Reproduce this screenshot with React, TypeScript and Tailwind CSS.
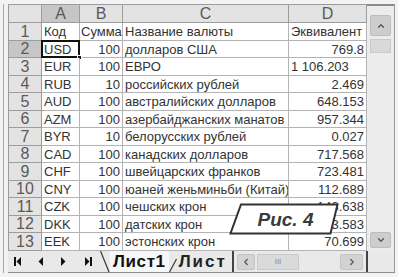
import { ChevronUp, ChevronDown, ChevronLeft, ChevronRight } from "lucide-react";

const rows = [
  ["Код", "Сумма", "Название валюты", "Эквивалент"],
  ["USD", "100", "долларов США", "769.8"],
  ["EUR", "100", "ЕВРО", "1 106.203"],
  ["RUB", "10", "российских рублей", "2.469"],
  ["AUD", "100", "австралийских долларов", "648.153"],
  ["AZM", "100", "азербайджанских манатов", "957.344"],
  ["BYR", "10", "белорусских рублей", "0.027"],
  ["CAD", "100", "канадских долларов", "717.568"],
  ["CHF", "100", "швейцарских франков", "723.481"],
  ["CNY", "100", "юаней женьминьби (Китай)", "112.689"],
  ["CZK", "100", "чешских крон", "143.638"],
  ["DKK", "100", "датских крон", "473.583"],
  ["EEK", "100", "эстонских крон", "70.699"],
];

const hdr =
  "flex items-center justify-center border-r border-b border-[#9c9c9c] text-[16px] leading-none text-[#5a5a5a]";

const Tri = ({ dir, bar }: { dir: "l" | "r"; bar?: boolean }) => (
  <svg width={bar ? 7 : 5} height="9" viewBox={bar ? "0 0 7 9" : "0 0 5 9"}>
    {dir === "l" ? (
      <>
        {bar && <rect x="0" y="0" width="2" height="9" fill="#111" />}
        <polygon points={bar ? "7,0 7,9 2.5,4.5" : "5,0 5,9 0.5,4.5"} fill="#111" />
      </>
    ) : (
      <>
        <polygon points="0,0 0,9 4.5,4.5" fill="#111" />
        {bar && <rect x="5" y="0" width="2" height="9" fill="#111" />}
      </>
    )}
  </svg>
);

export default function App() {
  return (
    <div className="relative w-[398px] h-[277px] overflow-hidden bg-[#f3f3f3] font-['Liberation_Sans',Arial,sans-serif]">
      <div className="flex pl-[3px] pt-[4px]">
        <div className="flex flex-col border-l border-[#a8a8a8] pl-[4px]">
          <div className="flex">
            {/* Grid */}
            <div className="flex flex-col w-[359px] border-t border-[#9c9c9c]">
              <div className="flex h-[18px]">
                <div className={`${hdr} w-[34px] bg-[#e3e3e3] border-l`} />
                <div className={`${hdr} w-[38px] bg-[#c6c6c6]`}>A</div>
                <div className={`${hdr} w-[43px] bg-[#e3e3e3]`}>B</div>
                <div className={`${hdr} w-[166px] bg-[#e3e3e3]`}>C</div>
                <div className={`${hdr} w-[78px] bg-[#e3e3e3]`}>D</div>
              </div>
              {rows.map((r, i) => (
                <div
                  key={i}
                  className={`flex ${i % 2 === 0 ? "h-[18px]" : "h-[17px]"} text-[13px] leading-none text-[#333]`}
                >
                  <div
                    className={`${hdr} w-[34px] border-l ${i === 1 ? "bg-[#c6c6c6]" : "bg-[#e3e3e3]"}`}
                  >
                    {i + 1}
                  </div>
                  <div className="relative flex items-center w-[38px] pl-[2px] bg-white border-r border-b border-[#b4b4b4]">
                    {r[0]}
                    {i === 1 && (
                      <>
                        <div className="absolute -top-[1px] -left-[1px] -right-[1px] -bottom-[1px] border-2 border-[#111]" />
                        <div className="absolute -right-[3px] -bottom-[3px] w-[5px] h-[5px] bg-[#111] border border-white" />
                      </>
                    )}
                  </div>
                  <div
                    className={`flex items-center w-[43px] bg-white border-r border-b border-[#b4b4b4] ${i === 0 ? "pl-[1px]" : "justify-end pr-[2px]"}`}
                  >
                    {r[1]}
                  </div>
                  <div className="flex items-center w-[166px] pl-[2px] bg-white border-r border-b border-[#b4b4b4] whitespace-nowrap overflow-hidden">
                    {r[2]}
                  </div>
                  <div
                    className={`flex items-center w-[78px] bg-white border-r border-b border-[#b4b4b4] whitespace-nowrap ${i === 0 || i === 2 ? "pl-[2px]" : "justify-end pr-[2px]"}`}
                  >
                    {r[3]}
                  </div>
                </div>
              ))}
            </div>
            {/* Vertical scrollbar */}
            <div className="flex flex-col items-center w-[28px] h-[247px] bg-[#ececec] border-t-2 border-r border-[#8a8a8a] border-r-[#9a9a9a]">
              <div className="mt-[9px] flex items-center justify-center w-[21px] h-[21px] bg-[#cdcdcd] border border-[#bdbdbd] rounded-[2px]">
                <ChevronUp size={10} strokeWidth={3} color="#555" />
              </div>
              <div className="mt-[3px] w-[21px] h-[14px] bg-[#d9d9d9] border border-[#cacaca]" />
              <div className="flex-1" />
              <div className="mb-[3px] flex items-center justify-center w-[21px] h-[16px] bg-[#cdcdcd] border border-[#bdbdbd] rounded-[2px]">
                <ChevronDown size={10} strokeWidth={3} color="#555" />
              </div>
            </div>
          </div>
          {/* Sheet tabs + horizontal scrollbar */}
          <div className="flex h-[22px] w-[387px] bg-[#e9e9e9] border-b border-[#8c8c8c]">
            <div className="flex items-center w-[92px] pl-[6px]">
              <Tri dir="l" bar />
              <div className="w-[17px]" />
              <Tri dir="l" />
              <div className="w-[18px]" />
              <Tri dir="r" />
              <div className="w-[19px]" />
              <Tri dir="r" bar />
            </div>
            <div className="flex w-[132px]">
              <svg width="10" height="22" viewBox="0 0 10 22" className="shrink-0">
                <line x1="0.5" y1="0" x2="9" y2="21" stroke="#333" strokeWidth="1.2" />
              </svg>
              <div className="flex items-center h-[21px] px-[3px] bg-[#f7f7f7] text-[17px] font-bold tracking-[0.6px] text-[#111] leading-none">
                Лист1
              </div>
              <svg width="8" height="22" viewBox="0 0 8 22" className="shrink-0">
                <line x1="0.5" y1="21" x2="7.5" y2="8" stroke="#333" strokeWidth="1.2" />
              </svg>
              <div className="flex items-center pl-[2px] text-[17px] font-bold tracking-[2px] text-[#222] leading-none whitespace-nowrap">
                Лист
              </div>
            </div>
            <div className="w-[2px] h-full bg-[#444]" />
            <div className="flex items-center w-[132px] pl-[3px]">
              <div className="flex items-center justify-center w-[18px] h-[16px] bg-[#d3d3d3] border border-[#c4c4c4] rounded-[2px]">
                <ChevronLeft size={10} strokeWidth={3} color="#555" />
              </div>
              <div className="ml-[2px] flex items-center justify-center w-[42px] h-[16px] bg-[#dadada] border border-[#cacaca] text-[8px] text-[#888] leading-none">
                III
              </div>
              <div className="flex-1" />
              <div className="mr-[3px] flex items-center justify-center w-[23px] h-[16px] bg-[#d3d3d3] border border-[#c4c4c4] rounded-[2px]">
                <ChevronRight size={10} strokeWidth={3} color="#555" />
              </div>
            </div>
            <div className="w-[2px] h-full bg-[#444]" />
            <div className="flex-1 border-r border-[#9a9a9a]" />
          </div>
        </div>
      </div>
      {/* Figure caption */}
      <div className="absolute left-[229px] top-[203px] w-[110px] h-[32px]">
        <svg width="110" height="32" viewBox="0 0 110 32" className="absolute inset-0">
          <polygon points="12,1.5 108.5,1.5 101.5,30.5 1.5,30.5" fill="#fff" stroke="#333" strokeWidth="2" />
        </svg>
        <div className="relative flex items-center justify-center h-full pl-[3px] text-[19px] font-bold italic text-[#3a3a3a] leading-none">
          Рис. 4
        </div>
      </div>
    </div>
  );
}
